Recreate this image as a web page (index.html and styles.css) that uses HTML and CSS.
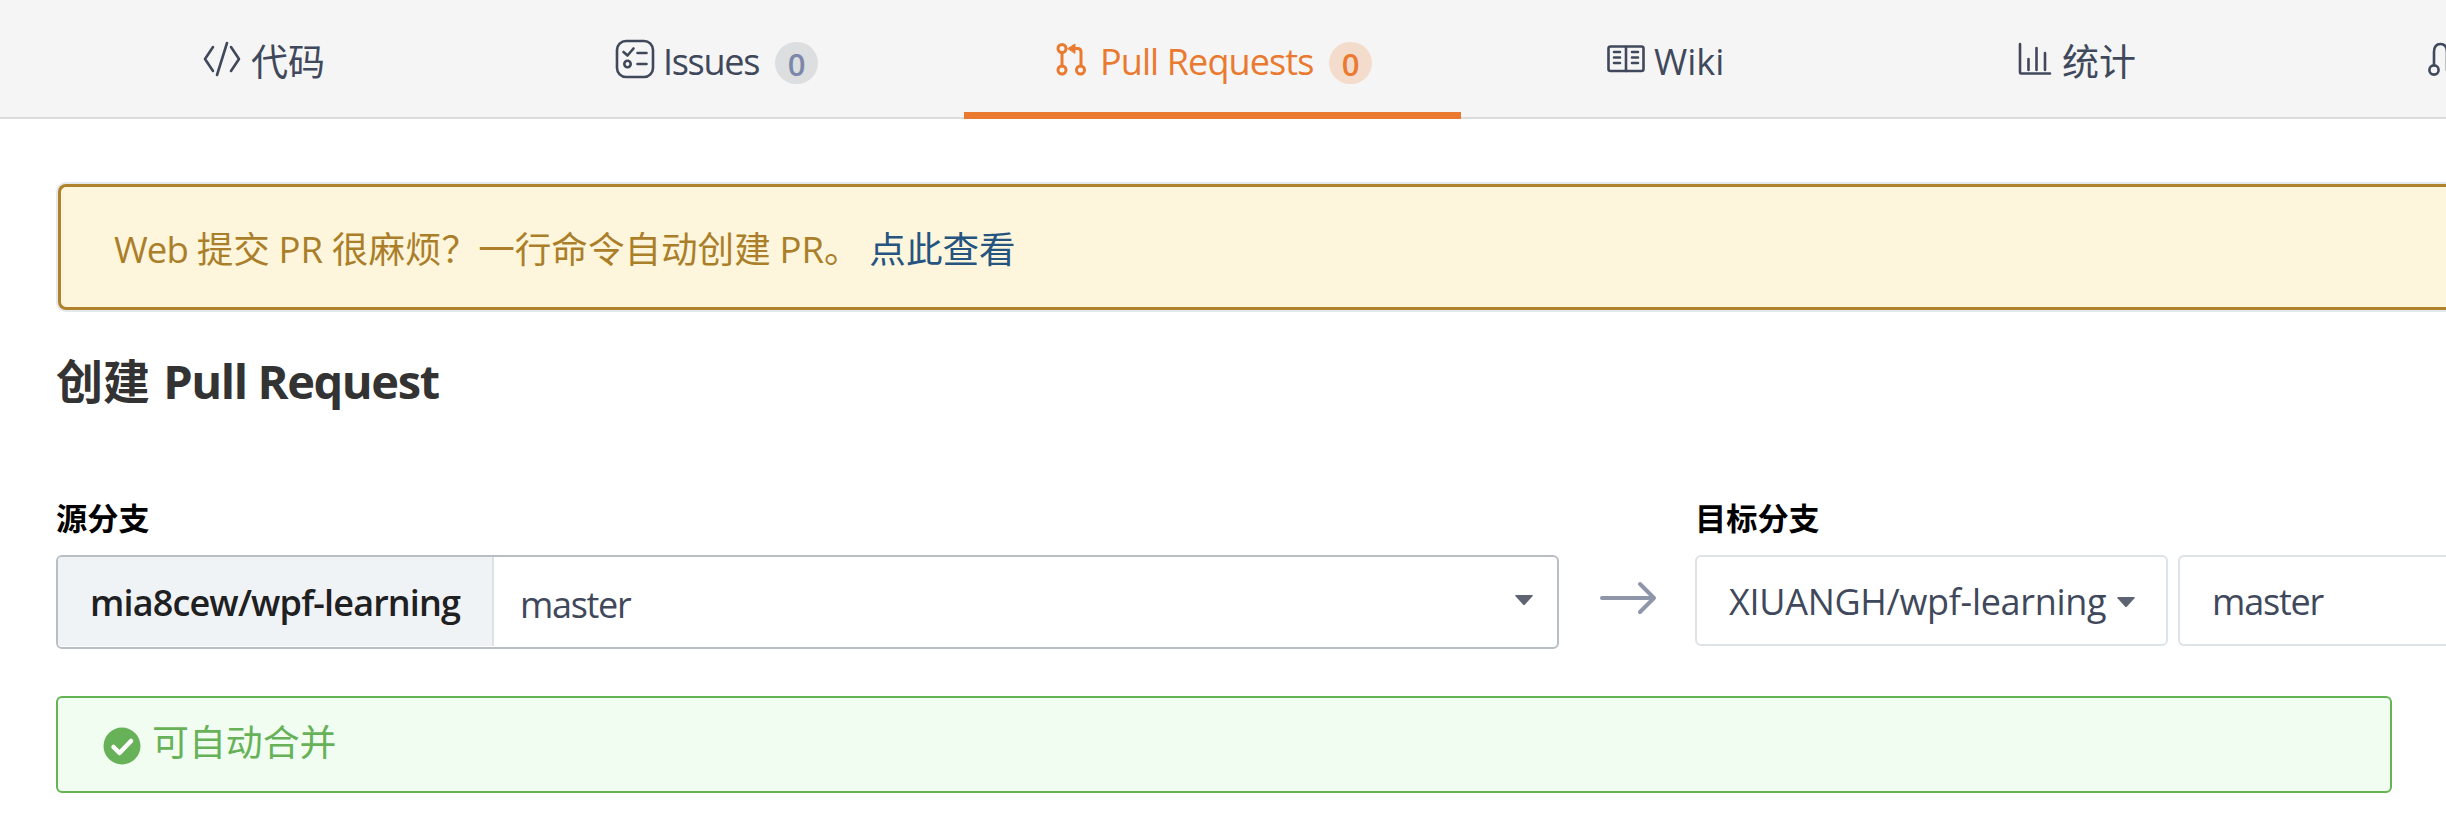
FILE: index.html
```html
<!DOCTYPE html>
<html lang="zh-CN">
<head>
<meta charset="utf-8">
<title>创建 Pull Request</title>
<link rel="stylesheet" href="styles.css">
</head>
<body>
<nav class="tabs">
  <a class="tab tab-code">
    <svg class="icon" width="40" height="38" viewBox="0 0 40 38"><path d="M11 7 3 19l8 12M29 7l8 12-8 12M25 3 15 35"/></svg>
    <span class="cjk">代码</span>
  </a>
  <a class="tab tab-issues">
    <svg class="icon" width="40" height="40" viewBox="0 0 40 40"><rect x="2" y="2" width="36" height="36" rx="9"/><path d="M8.500 13l4 3.500 6-7M22.500 14h9M22.500 25h9"/><circle cx="12.500" cy="25" r="3.200"/></svg>
    <span class="issues-text">Issues</span><span class="badge">0</span>
  </a>
  <a class="tab tab-pulls active">
    <svg class="icon" width="32" height="34" viewBox="0 0 32 34"><circle cx="6" cy="6.500" r="4"/><circle cx="6" cy="28" r="4"/><circle cx="24.500" cy="28" r="4"/><path d="M6 11v13M17 6.500h4.500q3.500 0 3.500 3.500v14"/><path class="solid" d="M12 6.500 19 2v9z"/></svg>
    <span class="pulls-text">Pull Requests</span><span class="badge">0</span>
  </a>
  <a class="tab tab-wiki">
    <svg class="icon" width="38" height="28" viewBox="0 0 38 28"><rect x="1.500" y="1.500" width="35" height="24.500" rx="2"/><path d="M19 2v24M7 7h6M7 12.500h6M7 18h6M25 7h6M25 12.500h6M25 18h6"/></svg>
    <span>Wiki</span>
  </a>
  <a class="tab tab-stats">
    <svg class="icon" width="34" height="34" viewBox="0 0 34 34"><path d="M2 2v28.500q0 1 1 1h29M10.500 17v11M18.500 6v22M27 11v17"/></svg>
    <span class="cjk">统计</span>
  </a>
  <a class="tab tab-more">
    <svg class="icon" width="19" height="34" viewBox="0 0 19 34"><circle cx="7" cy="28" r="4.600"/><path d="M7 23V10q0-8 6.500-8T20 10v18"/></svg>
  </a>
</nav>
<main class="page">
  <div class="notice"><span class="web">Web</span> 提交 PR 很麻烦？一行命令自动创建 PR。 <a class="notice-link">点此查看</a></div>
  <h1 class="title">创建 <span class="title-latin">Pull Request</span></h1>
  <div class="branches">
    <section class="source">
      <h2 class="label">源分支</h2>
      <div class="source-box">
        <div class="repo">mia8cew/wpf-learning</div>
        <div class="branch">master</div>
        <svg class="caret" width="18" height="10" viewBox="0 0 18 10"><path d="M1 0h16q1.500 0 .5 1.200L10 9.500q-1 1-2 0L.5 1.200Q-.5 0 1 0z"/></svg>
      </div>
    </section>
    <svg class="arrow" width="58" height="34" viewBox="0 0 58 34"><path d="M3 17h51M41 3l14 14-14 14"/></svg>
    <section class="target">
      <h2 class="label">目标分支</h2>
      <div class="target-row">
        <div class="target-repo"><span>XIUANGH/wpf-learning</span>
          <svg class="caret" width="18" height="10" viewBox="0 0 18 10"><path d="M1 0h16q1.500 0 .5 1.200L10 9.500q-1 1-2 0L.5 1.200Q-.5 0 1 0z"/></svg>
        </div>
        <div class="target-branch">master</div>
      </div>
    </section>
  </div>
  <div class="merge-state">
    <svg class="check" width="38" height="38" viewBox="0 0 38 38"><circle cx="19" cy="19" r="18.500"/><path d="M10.500 20l6 6L28 14"/></svg>
    <span>可自动合并</span>
  </div>
</main>
</body>
</html>
```
FILE: styles.css
```css
* { box-sizing: border-box; }
body {
  margin: 0;
  width: 2446px;
  height: 815px;
  overflow: hidden;
  background: #fff;
  color: #40485b;
  font: 36px/50px "Open Sans", "Noto Sans CJK SC", sans-serif;
  white-space: nowrap;
}
svg { display: block; flex: none; fill: none; }

.tabs {
  display: flex;
  height: 119px;
  background: #f5f5f5;
  border-bottom: 2px solid #dcdcdc;
}
.tab {
  display: flex;
  flex: none;
  align-items: flex-start;
  height: 119px;
  padding-top: 37px;
}
.icon {
  stroke: #40485b;
  stroke-width: 2.6;
  stroke-linecap: round;
  stroke-linejoin: round;
}
.cjk { font-size: 37px; }
.tab-code { width: 524px; padding-left: 202px; }
.tab-code .icon { margin: 3px 9px 0 0; }
.tab-issues { width: 440px; padding-left: 91px; }
.tab-issues .icon { margin: 2px 8px 0 0; }
.issues-text { width: 112px; letter-spacing: -1.3px; }
.badge {
  width: 43px;
  height: 42px;
  margin-top: 5px;
  border-radius: 21px;
  background: #dcdee0;
  color: #7c88ab;
  font-size: 31px;
  font-weight: 600;
  line-height: 44px;
  text-align: center;
}
.tab-pulls { width: 497px; padding-left: 92px; }
.tab-pulls .icon { margin: 5px 12px 0 0; stroke-width: 3; }
.pulls-text { width: 229px; letter-spacing: -.9px; }
.active {
  border-bottom: 7px solid #ea7a30;
  color: #ea7a30;
}
.active .icon { stroke: #ea7a30; }
.active .solid { fill: #ea7a30; stroke-width: 1; }
.active .badge { background: #f4dccd; color: #ea7a30; }
.tab-wiki { width: 468px; padding-left: 146px; }
.tab-wiki .icon { margin: 8px 9px 0 0; }
.tab-stats { width: 400px; padding-left: 89px; }
.tab-stats .icon { margin: 5px 10px 0 0; }
.tab-more { padding-left: 98px; }
.tab-more .icon { margin-top: 5px; }

.page { padding: 65px 0 0 56px; }
.notice {
  height: 126px;
  margin-left: 2px;
  padding: 37px 0 0 53px;
  border: 3px solid #af822b;
  border-right: 0;
  border-radius: 8px 0 0 8px;
  box-shadow: 0 0 0 2px #e4e9ec;
  background: #fef6dc;
  color: #ab7f2a;
  font-size: 36.6px;
  word-spacing: -.8px;
}
.web { letter-spacing: -.9px; }
.notice-link { color: #265480; }
.title {
  margin: 39px 0 0;
  color: #333;
  font-size: 47px;
  font-weight: 700;
  line-height: 64px;
}
.title-latin { margin-left: 1px; letter-spacing: -1.4px; }
.branches { display: flex; margin-top: 82px; }
.label {
  height: 60px;
  margin: 0;
  color: #000;
  font-size: 31.200px;
  font-weight: 700;
  line-height: 46px;
}
.source { flex: none; width: 1503px; }
.source-box {
  display: flex;
  height: 94px;
  border: 2px solid #b9bec4;
  border-radius: 6px;
}
.repo {
  width: 436px;
  height: 89px;
  padding: 21px 0 0 32px;
  border-right: 2px solid #dde2e6;
  border-radius: 4px 0 0 4px;
  background: #eff3f6;
  color: #1f2022;
  font-weight: 600;
  letter-spacing: -.85px;
}
.branch { width: 1021px; padding: 23px 0 0 26px; letter-spacing: -1.300px; }
.caret { fill: #5f6472; margin-top: 38px; }
.arrow {
  width: 58px;
  margin: 86px 38px 0 40px;
  stroke: #8f96a9;
  stroke-width: 4;
  stroke-linecap: round;
  stroke-linejoin: round;
}
.target { flex: 1; min-width: 0; }
.target-row { display: flex; gap: 10px; }
.target-repo, .target-branch {
  display: flex;
  height: 91px;
  padding: 20px 0 0 32px;
  border: 2px solid #dde3e7;
  border-radius: 6px;
}
.target-repo { flex: none; width: 473px; letter-spacing: -.3px; }
.target-repo span { width: 388px; }
.target-repo .caret { margin-top: 20px; }
.target-branch {
  flex: 1;
  border-right: 0;
  border-radius: 6px 0 0 6px;
  letter-spacing: -1.200px;
}
.merge-state {
  display: flex;
  width: 2336px;
  height: 97px;
  margin-top: 47px;
  padding: 19px 0 0 45px;
  border: 2px solid #64b455;
  border-radius: 6px;
  background: #f2fdf2;
  color: #67b258;
  font-size: 36.900px;
}
.check { margin: 10px 11px 0 0; }
.check circle { fill: #67b258; }
.check path { stroke: #fff; stroke-width: 4.500; stroke-linecap: round; stroke-linejoin: round; }
```
